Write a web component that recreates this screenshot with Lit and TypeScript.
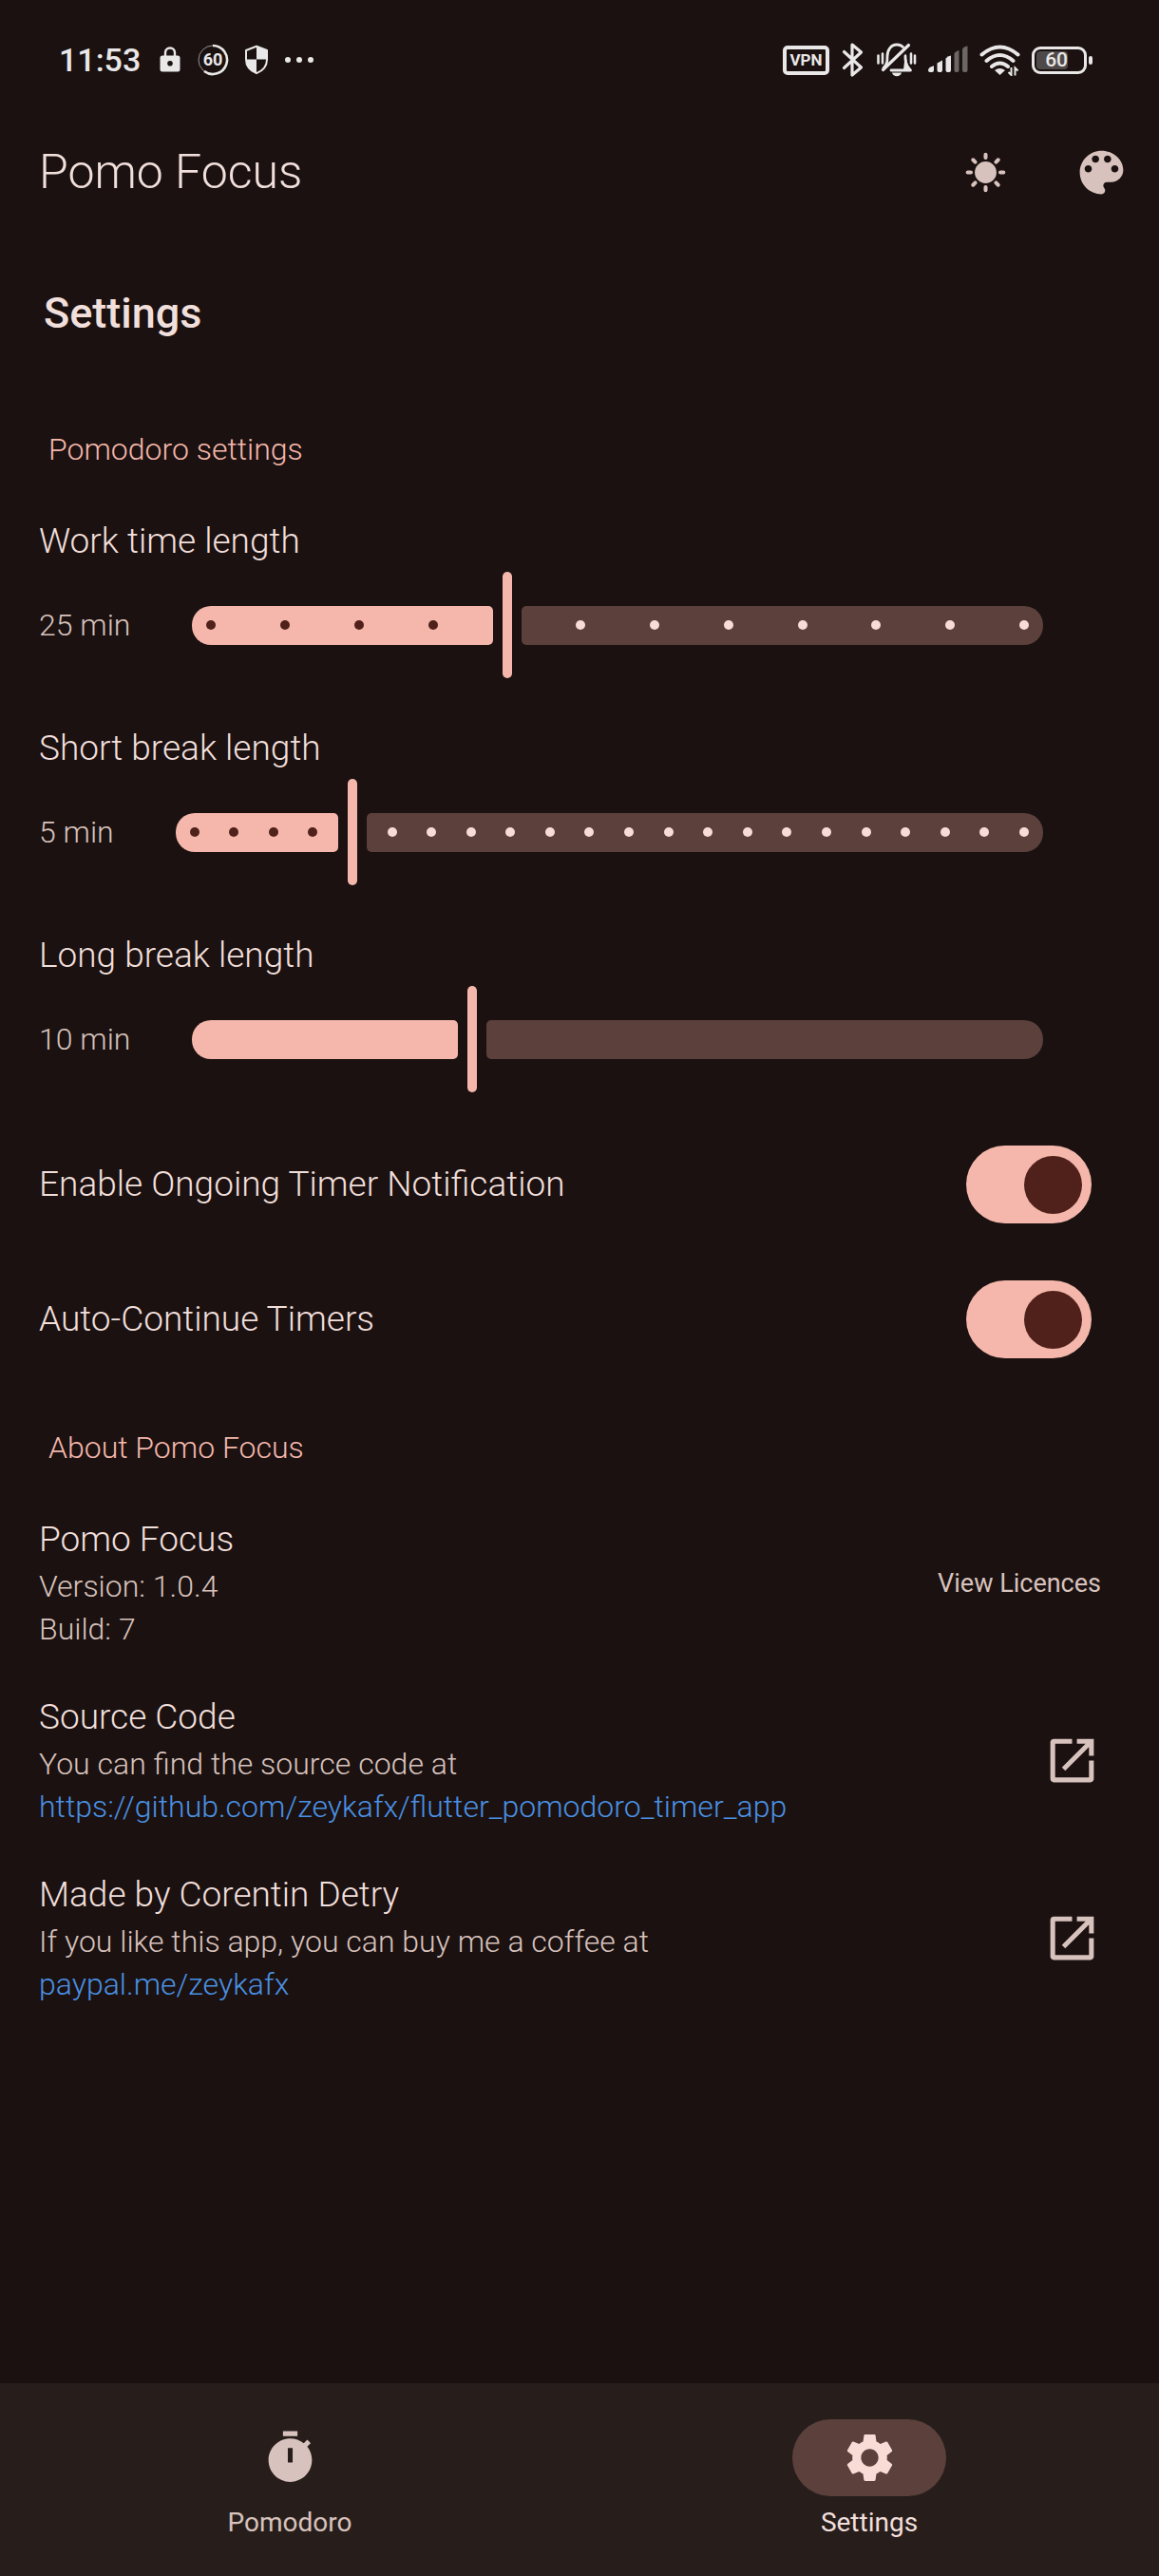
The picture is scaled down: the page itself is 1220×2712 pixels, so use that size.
import { LitElement, html, css, nothing } from "lit";
import { customElement, property, state } from "lit/decorators.js";
import { classMap } from "lit/directives/class-map.js";
import { styleMap } from "lit/directives/style-map.js";

const paths = {
  palette:
    "M12 3c-4.97 0-9 4.03-9 9s4.03 9 9 9c.83 0 1.5-.67 1.5-1.5 0-.39-.15-.74-.39-1.01-.23-.26-.38-.61-.38-.99 0-.83.67-1.5 1.5-1.5H16c2.76 0 5-2.24 5-5 0-4.42-4.03-8-9-8zm-5.5 9c-.83 0-1.5-.67-1.5-1.5S5.67 9 6.5 9 8 9.67 8 10.5 7.33 12 6.5 12zm3-4C8.67 8 8 7.33 8 6.5S8.67 5 9.5 5s1.5.67 1.5 1.5S10.33 8 9.5 8zm5 0c-.83 0-1.5-.67-1.5-1.5S13.67 5 14.5 5s1.5.67 1.5 1.5S15.33 8 14.5 8zm3 4c-.83 0-1.5-.67-1.5-1.5S16.67 9 17.5 9s1.5.67 1.5 1.5-.67 1.5-1.5 1.5z",
  timer:
    "M15 1H9v2h6V1zM19.03 7.39l1.42-1.42c-.43-.51-.9-.99-1.41-1.41l-1.42 1.42C16.07 4.74 14.12 4 12 4c-4.97 0-9 4.03-9 9s4.02 9 9 9 9-4.03 9-9c0-2.12-.74-4.07-1.97-5.61zM13 14h-2V8h2v6z",
  gear:
    "M19.14 12.94c.04-.3.06-.61.06-.94 0-.32-.02-.64-.07-.94l2.03-1.58c.18-.14.23-.41.12-.61l-1.92-3.32c-.12-.22-.37-.29-.59-.22l-2.39.96c-.5-.38-1.03-.7-1.62-.94l-.36-2.54c-.04-.24-.24-.41-.48-.41h-3.84c-.24 0-.43.17-.47.41l-.36 2.54c-.59.24-1.13.57-1.62.94l-2.39-.96c-.22-.08-.47 0-.59.22L2.74 8.87c-.12.21-.08.47.12.61l2.03 1.58c-.05.3-.09.63-.09.94s.02.64.07.94l-2.03 1.58c-.18.14-.23.41-.12.61l1.92 3.32c.12.22.37.29.59.22l2.39-.96c.5.38 1.03.7 1.62.94l.36 2.54c.05.24.24.41.48.41h3.84c.24 0 .44-.17.47-.41l.36-2.54c.59-.24 1.13-.56 1.62-.94l2.39.96c.22.08.47 0 .59-.22l1.92-3.32c.12-.22.07-.47-.12-.61l-2.01-1.58zM12 15.6c-1.98 0-3.6-1.62-3.6-3.6s1.62-3.6 3.6-3.6 3.6 1.62 3.6 3.6-1.62 3.6-3.6 3.6z",
  open:
    "M19 19H5V5h7V3H4.4C3.6 3 3 3.6 3 4.4v15.2c0 .8.6 1.4 1.4 1.4h15.2c.8 0 1.4-.6 1.4-1.4V12h-2v7zM14 3v2h3.59l-9.83 9.83 1.41 1.41L19 6.41V10h2V3h-7z",
};

const icon = (d: string) => html`
  <svg class="icon" viewBox="0 0 24 24" aria-hidden="true"><path fill="currentColor" d=${d}></path></svg>
`;

const sunIcon = html`
  <svg class="icon" viewBox="0 0 24 24" aria-hidden="true">
    <circle cx="12" cy="12" r="4.5" fill="currentColor"></circle>
    <path
      d="M12 4.6V5.9M12 18.1V19.4M4.6 12H5.9M18.1 12H19.4M6.8 6.8L7.7 7.7M16.3 16.3L17.2 17.2M17.2 6.8L16.3 7.7M7.7 16.3L6.8 17.2"
      fill="none"
      stroke="currentColor"
      stroke-width="1.6"
      stroke-linecap="round"
    ></path>
  </svg>
`;

@customElement("status-bar")
export class StatusBar extends LitElement {
  static styles = css`
    :host {
      display: flex;
      align-items: center;
      justify-content: space-between;
      box-sizing: border-box;
      height: 120px;
      padding: 6px 70px 0 62px;
      color: #e9e7e7;
    }
    .group {
      display: flex;
      align-items: center;
    }
    .left {
      gap: 16px;
    }
    .right {
      gap: 12px;
    }
    .time {
      padding-right: 3px;
      font-size: 34px;
      line-height: 40px;
      font-weight: 500;
    }
    svg {
      display: block;
    }
    .vpn {
      display: grid;
      place-items: center;
      box-sizing: border-box;
      width: 49px;
      height: 31px;
      border: 4px solid currentColor;
      border-radius: 5px;
      font-size: 17px;
      line-height: 20px;
      font-weight: 700;
    }
    .battery {
      display: flex;
      align-items: center;
      gap: 2px;
    }
    .cell {
      box-sizing: border-box;
      width: 58px;
      height: 29px;
      padding: 2px;
      border: 3px solid currentColor;
      border-radius: 9px;
    }
    .level {
      display: grid;
      place-items: center end;
      width: 33px;
      height: 19px;
      border-radius: 4px;
      background: #4f4a49;
      font-size: 21px;
      line-height: 19px;
      font-weight: 500;
    }
    .nub {
      width: 4px;
      height: 9px;
      border-radius: 2px;
      background: currentColor;
    }
    .badge {
      font-size: 18px;
      font-weight: 700;
    }
  `;

  render() {
    return html`
      <div class="group left">
        <span class="time">11:53</span>
        <svg width="24" height="32" viewBox="0 0 24 32" aria-hidden="true">
          <path d="M7 13V8.500a5 5 0 0 1 10 0V13" fill="none" stroke="currentColor" stroke-width="2.400"></path>
          <path
            fill="currentColor"
            fill-rule="evenodd"
            d="M4 11.500h16a2.500 2.500 0 0 1 2.500 2.500v12a2.500 2.500 0 0 1-2.500 2.500H4a2.500 2.500 0 0 1-2.500-2.500V14A2.500 2.500 0 0 1 4 11.500zM12 17a2.800 2.800 0 1 0 0 5.600 2.800 2.800 0 0 0 0-5.600z"
          ></path>
        </svg>
        <svg width="34" height="34" viewBox="0 0 34 34" aria-hidden="true">
          <circle cx="17" cy="17" r="15" fill="none" stroke="currentColor" stroke-width="1" opacity=".6"></circle>
          <path d="M17 2a15 15 0 1 1-9 27" fill="none" stroke="currentColor" stroke-width="2.600"></path>
          <text class="badge" x="17" y="23.400" text-anchor="middle" fill="currentColor">60</text>
        </svg>
        <svg width="26" height="32" viewBox="0 0 26 32" aria-hidden="true">
          <path
            d="M13 1.800L24 6v9.500c0 7-4.500 12-11 14.700C6.500 27.500 2 22.500 2 15.500V6z"
            fill="none"
            stroke="currentColor"
            stroke-width="2"
            stroke-linejoin="round"
          ></path>
          <path fill="currentColor" d="M13 1.800L24 6v9.500H13zM2 15.500h11v14.700C6.500 27.500 2 22.500 2 15.500z"></path>
        </svg>
        <svg width="32" height="8" viewBox="0 0 32 8" fill="currentColor" aria-hidden="true">
          <circle cx="4" cy="4" r="3"></circle>
          <circle cx="16" cy="4" r="3"></circle>
          <circle cx="28" cy="4" r="3"></circle>
        </svg>
      </div>
      <div class="group right">
        <span class="vpn">VPN</span>
        <svg width="25" height="38" viewBox="0 0 25 38" aria-hidden="true">
          <path
            d="M3.500 10.500l18 16.500-9.500 8V3l9.500 8-18 16.500"
            fill="none"
            stroke="currentColor"
            stroke-width="3.200"
            stroke-linejoin="round"
            stroke-linecap="round"
          ></path>
        </svg>
        <svg width="43" height="38" viewBox="0 0 43 38" fill="none" stroke="currentColor" aria-hidden="true">
          <path
            d="M8 27.500c4-4 4-7 4-12 0-7 4-12.500 10-12.500 3 0 5 1 6.500 2.500M16 30h20.500c-4-4-5.500-7-5.500-12.500V15"
            stroke-width="2.800"
            stroke-linecap="round"
            stroke-linejoin="round"
          ></path>
          <path d="M7.500 29.500L34.500 3.500" stroke-width="3.200" stroke-linecap="round"></path>
          <path d="M31 12l2.500 12 3 6-7.500-.500z" fill="currentColor" stroke="none"></path>
          <path d="M17 32.500h10c-1 5-9 5-10 0z" fill="currentColor" stroke="none"></path>
          <path d="M2.500 14.500v8M7 12.500v10M37 12.500v10M41 14.500v8" stroke-width="2.600" stroke-linecap="round"></path>
        </svg>
        <svg width="42" height="30" viewBox="0 0 42 30" fill="currentColor" aria-hidden="true">
          <path d="M0 26q0-2 2-3.200l4-1.600V26q0 2-2 2H2q-2 0-2-2z"></path>
          <path d="M9.500 18.500l5.500-3V26q0 2-2 2h-1.500q-2 0-2-2z"></path>
          <path d="M18.500 13.500q2-2.500 5.500-3V26q0 2-2 2h-1.500q-2 0-2-2z"></path>
          <path opacity=".4" d="M27.500 8q2-2.500 5-3v21q0 2-2 2h-1q-2 0-2-2z"></path>
          <path opacity=".4" d="M36 3.500q2-2.500 5.500-3V26q0 2-2 2H38q-2 0-2-2z"></path>
        </svg>
        <svg width="43" height="34" viewBox="0 0 43 34" fill="none" stroke="currentColor" aria-hidden="true">
          <path
            d="M2.500 11.500Q21.500 -4.500 40.500 11.500M7.500 18Q21.500 6 35.500 18M13 24Q21.500 17 30 24"
            stroke-width="4"
            stroke-linecap="round"
          ></path>
          <path d="M16 28q5.500-4 11 0l-5.500 5z" fill="currentColor" stroke="none"></path>
          <path d="M33.500 25v8l-3-3M37.500 33.500v-8l3 3" stroke-width="2"></path>
        </svg>
        <div class="battery">
          <div class="cell"><div class="level">60</div></div>
          <div class="nub"></div>
        </div>
      </div>
    `;
  }
}

@customElement("length-slider")
export class LengthSlider extends LitElement {
  static styles = css`
    :host {
      display: block;
      padding: 0 122px 0 41px;
    }
    .name {
      display: block;
      color: #f1dfdb;
      font-size: 37px;
      line-height: 52px;
    }
    .row {
      display: flex;
      align-items: center;
      gap: 65px;
      height: 124px;
    }
    .value {
      color: #d8c2bd;
      font-size: 32px;
      line-height: 46px;
      white-space: nowrap;
    }
    .slider {
      position: relative;
      flex: 1;
      display: flex;
      align-items: center;
      gap: 10px;
      height: 112px;
    }
    .active,
    .rest {
      height: 41px;
    }
    .active {
      flex: none;
      border-radius: 20px 5px 5px 20px;
      background: #f5b7ab;
    }
    .rest {
      flex: 1;
      border-radius: 5px 20px 20px 5px;
      background: #5b403b;
    }
    .handle {
      flex: none;
      width: 10px;
      height: 112px;
      border-radius: 5px;
      background: #f5b7ab;
    }
    .ticks {
      position: absolute;
      inset: 0 15px;
      display: flex;
      align-items: center;
      justify-content: space-between;
      pointer-events: none;
    }
    .tick {
      width: 10px;
      height: 10px;
      border-radius: 50%;
      background: #f9dcd6;
    }
    .tick.on {
      background: #4f211a;
    }
    .tick.current {
      visibility: hidden;
    }
    .range {
      position: absolute;
      inset: 0;
      width: 100%;
      height: 100%;
      margin: 0;
      opacity: 0;
      cursor: pointer;
    }
  `;

  @property() name = "";
  @property({ type: Number }) min = 0;
  @property({ type: Number }) max = 10;
  @property({ type: Number }) step = 1;
  @property({ type: Number }) value = 0;
  @property({ type: Boolean }) ticks = false;

  private onInput(e: Event) {
    this.value = Number((e.target as HTMLInputElement).value);
  }

  render() {
    const ratio = (this.value - this.min) / (this.max - this.min);
    const count = (this.max - this.min) / this.step + 1;
    const at = (this.value - this.min) / this.step;
    return html`
      <label class="name" for="range">${this.name}</label>
      <div class="row">
        <output class="value" for="range">${this.value} min</output>
        <div class="slider">
          <div class="active" style=${styleMap({ width: `calc(5px + (100% - 40px) * ${ratio})` })}></div>
          <div class="handle"></div>
          <div class="rest"></div>
          ${this.ticks
            ? html`<div class="ticks">
                ${Array.from(
                  { length: count },
                  (_, i) => html`<span class=${classMap({ tick: true, on: i < at, current: i === at })}></span>`,
                )}
              </div>`
            : nothing}
          <input
            class="range"
            id="range"
            type="range"
            min=${this.min}
            max=${this.max}
            step=${this.step}
            .value=${String(this.value)}
            @input=${this.onInput}
          />
        </div>
      </div>
    `;
  }
}

@customElement("toggle-row")
export class ToggleRow extends LitElement {
  static styles = css`
    :host {
      display: flex;
      align-items: center;
      justify-content: space-between;
      height: 122px;
      padding: 0 71px 0 41px;
    }
    .name {
      color: #f1dfdb;
      font-size: 37px;
      line-height: 52px;
    }
    .switch {
      appearance: none;
      display: flex;
      align-items: center;
      box-sizing: border-box;
      width: 132px;
      height: 82px;
      margin: 0;
      padding: 0 10px;
      border-radius: 41px;
      background: #5b403b;
      cursor: pointer;
    }
    .switch::before {
      content: "";
      width: 61px;
      height: 61px;
      border-radius: 50%;
      background: #d8c2bd;
    }
    .switch:checked {
      justify-content: flex-end;
      background: #f5b7ab;
    }
    .switch:checked::before {
      background: #4f211a;
    }
  `;

  @property() name = "";
  @property({ type: Boolean }) checked = false;

  render() {
    return html`
      <label class="name" for="switch">${this.name}</label>
      <input class="switch" id="switch" type="checkbox" role="switch" .checked=${this.checked} />
    `;
  }
}

@customElement("app-root")
export class AppRoot extends LitElement {
  static styles = css`
    :host {
      display: flex;
      flex-direction: column;
      min-height: 100vh;
      background: #1a1110;
      color: #f1dfdb;
      font-family: Roboto, "Liberation Sans", sans-serif;
      font-weight: 300;
    }
    button {
      padding: 0;
      border: 0;
      background: none;
      color: inherit;
      font: inherit;
      cursor: pointer;
    }
    .icon {
      display: block;
      width: 61px;
      height: 61px;
    }
    .app-bar {
      display: flex;
      align-items: center;
      height: 122px;
      padding-left: 41px;
    }
    .title {
      flex: 1;
      margin: 0;
      font-size: 50px;
      line-height: 60px;
      font-weight: 300;
    }
    .action {
      display: grid;
      place-items: center;
      width: 122px;
      height: 122px;
      color: #d8c2bd;
    }
    .content {
      flex: 1;
      padding: 62px 0 44px;
    }
    .heading {
      margin: 0 0 94px;
      padding-left: 46px;
      font-size: 45px;
      line-height: 52px;
      font-weight: 500;
    }
    .section {
      margin: 51px 0 48px;
      padding-left: 51px;
      color: #f5b7ab;
      font-size: 32px;
      line-height: 46px;
      font-weight: 300;
    }
    .sliders {
      display: flex;
      flex-direction: column;
      gap: 42px;
    }
    .toggles {
      display: flex;
      flex-direction: column;
      gap: 20px;
      padding-top: 30px;
    }
    .about {
      display: flex;
      flex-direction: column;
      gap: 44px;
      padding: 0 61px 0 41px;
    }
    .item {
      display: flex;
      align-items: center;
      justify-content: space-between;
    }
    .item-title {
      margin: 0 0 1px;
      font-size: 37px;
      line-height: 52px;
      font-weight: 300;
    }
    .line {
      margin: 0;
      color: #d8c2bd;
      font-size: 32px;
      line-height: 45px;
    }
    .link {
      color: #4a90e2;
      text-decoration: none;
    }
    .licences {
      color: #d8c2bd;
      font-size: 27px;
      line-height: 40px;
      font-weight: 400;
    }
    .open {
      color: #d8c2bd;
    }
    .nav {
      display: flex;
      background: #271e1c;
    }
    .tab {
      flex: 1;
      display: flex;
      flex-direction: column;
      align-items: center;
      gap: 8px;
      padding: 38px 0 36px;
      color: #d8c2bd;
    }
    .pill {
      display: grid;
      place-items: center;
      width: 162px;
      height: 81px;
      border-radius: 41px;
    }
    .tab-label {
      font-size: 28px;
      line-height: 40px;
      font-weight: 400;
    }
    .tab.selected {
      color: #f1dfdb;
    }
    .tab.selected .pill {
      background: #5b403b;
      color: #f9dcd6;
    }
  `;

  @state() private tab = "Settings";

  private renderTab(name: string, d: string) {
    const selected = this.tab === name;
    return html`
      <button
        class=${classMap({ tab: true, selected })}
        aria-current=${selected ? "page" : "false"}
        @click=${() => (this.tab = name)}
      >
        <span class="pill">${icon(d)}</span>
        <span class="tab-label">${name}</span>
      </button>
    `;
  }

  private renderLinkItem(title: string, text: string, url: string, label: string) {
    return html`
      <div class="item">
        <div>
          <h4 class="item-title">${title}</h4>
          <p class="line">${text}</p>
          <p class="line"><a class="link" href=${url}>${label}</a></p>
        </div>
        <a class="open" href=${url} aria-label=${title}>${icon(paths.open)}</a>
      </div>
    `;
  }

  render() {
    return html`
      <status-bar></status-bar>
      <header class="app-bar">
        <h1 class="title">Pomo Focus</h1>
        <button class="action" aria-label="Theme mode">${sunIcon}</button>
        <button class="action" aria-label="Theme colour">${icon(paths.palette)}</button>
      </header>
      <main class="content">
        <h2 class="heading">Settings</h2>
        <h3 class="section">Pomodoro settings</h3>
        <div class="sliders">
          <length-slider name="Work time length" min="5" max="60" step="5" value="25" ticks></length-slider>
          <length-slider name="Short break length" min="1" max="22" value="5" ticks></length-slider>
          <length-slider name="Long break length" min="1" max="29" value="10"></length-slider>
        </div>
        <div class="toggles">
          <toggle-row name="Enable Ongoing Timer Notification" checked></toggle-row>
          <toggle-row name="Auto-Continue Timers" checked></toggle-row>
        </div>
        <h3 class="section">About Pomo Focus</h3>
        <div class="about">
          <div class="item">
            <div>
              <h4 class="item-title">Pomo Focus</h4>
              <p class="line">Version: 1.0.4</p>
              <p class="line">Build: 7</p>
            </div>
            <button class="licences">View Licences</button>
          </div>
          ${this.renderLinkItem(
            "Source Code",
            "You can find the source code at",
            "https://github.com/zeykafx/flutter_pomodoro_timer_app",
            "https://github.com/zeykafx/flutter_pomodoro_timer_app",
          )}
          ${this.renderLinkItem(
            "Made by Corentin Detry",
            "If you like this app, you can buy me a coffee at",
            "https://paypal.me/zeykafx",
            "paypal.me/zeykafx",
          )}
        </div>
      </main>
      <nav class="nav">${this.renderTab("Pomodoro", paths.timer)} ${this.renderTab("Settings", paths.gear)}</nav>
    `;
  }
}
